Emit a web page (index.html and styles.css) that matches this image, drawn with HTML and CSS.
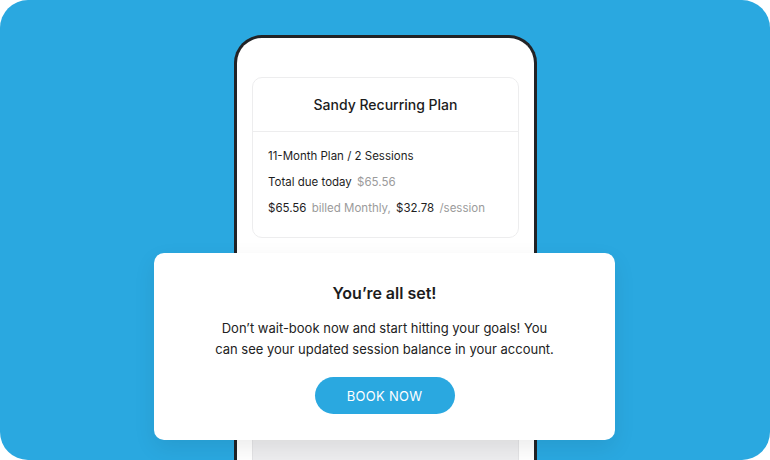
FILE: index.html
```html
<!DOCTYPE html>
<html>
<head>
<meta charset="utf-8">
<link rel="stylesheet" href="styles.css">
</head>
<body>
<div class="stage">
  <div class="phone">
    <div class="screen">
      <div class="card">
        <div class="card-head">Sandy Recurring Plan</div>
        <div class="card-body">
          <div class="row">11-Month Plan / 2 Sessions</div>
          <div class="row">Total due today <span class="muted">$65.56</span></div>
          <div class="row">$65.56 <span class="muted">billed Monthly,</span> $32.78 <span class="muted">/session</span></div>
        </div>
      </div>
      <div class="card card-next"></div>
    </div>
  </div>
  <div class="dialog">
    <h2 class="dialog-title">You’re all set!</h2>
    <p class="dialog-text">Don’t wait-book now and start hitting your goals! You can see your updated session balance in your account.</p>
    <button class="btn">BOOK NOW</button>
  </div>
</div>
</body>
</html>
```

FILE: styles.css
```css
* { box-sizing: border-box; }
html, body { margin: 0; padding: 0; background: #ffffff; }
body { font-family: Inter, "Noto Sans", "Liberation Sans", sans-serif; color: #1e1e1e; }

.stage {
  position: relative;
  width: 770px;
  height: 460px;
  background: #2aa8e0;
  border-radius: 28px;
  overflow: hidden;
  display: flex;
  justify-content: center;
}

.phone {
  margin-top: 35px;
  margin-left: 1px;
  width: 303px;
  height: 460px;
  border: 3px solid #222326;
  border-bottom: none;
  border-radius: 28px 28px 0 0;
  background: #ffffff;
  flex-shrink: 0;
}

.screen {
  padding: 39px 15px 0;
  display: flex;
  flex-direction: column;
  gap: 17px;
}

.card {
  border: 1px solid #ededee;
  border-radius: 10px;
  background: #fff;
}

.card-head {
  height: 54px;
  display: flex;
  align-items: center;
  justify-content: center;
  font-size: 14px;
  font-weight: 500;
  border-bottom: 1px solid #ededee;
  color: #1c1c1c;
}

.card-body {
  padding: 11px 15px 16px;
  font-size: 11.5px;
}

.row {
  height: 26px;
  line-height: 26px;
  white-space: nowrap;
  color: #1e1e1e;
}

.muted { color: #9b9b9b; margin-left: 2px; margin-right: 2px; }

.card-next { height: 240px; background: #ededef; border-color: #e3e3e5; }

.dialog {
  position: absolute;
  left: 154px;
  top: 253px;
  width: 461px;
  height: 187px;
  background: #ffffff;
  border-radius: 10px;
  box-shadow: 0 8px 22px rgba(0, 0, 0, 0.08);
  display: flex;
  flex-direction: column;
  align-items: center;
  text-align: center;
}

.dialog-title {
  margin: 30px 0 0;
  font-size: 16px;
  font-weight: 600;
  line-height: 20px;
  color: #1c1c1c;
}

.dialog-text {
  margin: 15px 0 0;
  width: 350px;
  font-size: 13px;
  line-height: 21px;
  color: #222;
}

.btn {
  margin-top: 17px;
  width: 140px;
  height: 37px;
  border: none;
  border-radius: 19px;
  background: #2aa8e0;
  color: #ffffff;
  font-family: Inter, "Noto Sans", "Liberation Sans", sans-serif;
  font-size: 13px;
  letter-spacing: 0.3px;
}
```
